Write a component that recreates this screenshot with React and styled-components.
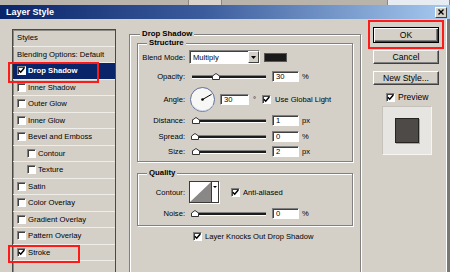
import styled, { createGlobalStyle } from "styled-components";

const GlobalStyle = createGlobalStyle`
  html, body {
    margin: 0;
    padding: 0;
    background: #d4d0c8;
  }
  body {
    font-family: "Liberation Sans", Arial, sans-serif;
    color: #000;
  }
`;

const Screen = styled.div`
  width: 450px;
  height: 272px;
  overflow: hidden;
  display: flex;
  flex-direction: column;
  background: #d4d0c8;
`;

const Backdrop = styled.div`
  height: 5px;
  flex: none;
  display: flex;
  background: #b8b4ac;
`;

const BackdropTab = styled.div`
  margin-left: ${(p) => p.$gap}px;
  width: ${(p) => p.$w}px;
  background: ${(p) => p.$bg};
  border-left: 1px solid #8c8880;
  border-right: 1px solid #8c8880;
`;

const TitleBar = styled.div`
  height: 14px;
  flex: none;
  display: flex;
  align-items: center;
  justify-content: space-between;
  padding: 0 3px 0 6px;
  background: linear-gradient(90deg, #0a246a 0%, #3b5c9c 45%, #a6caf0 100%);
  color: #fff;
  font-weight: bold;
  font-size: 9px;
`;

const CloseButton = styled.div`
  width: 12px;
  height: 11px;
  box-sizing: border-box;
  background: #d4d0c8;
  border: 1px solid;
  border-color: #fff #404040 #404040 #fff;
  display: flex;
  align-items: center;
  justify-content: center;
`;

const Body = styled.div`
  flex: 1;
  min-height: 0;
  display: flex;
  align-items: flex-start;
  padding-left: 12px;
  border-right: 3px solid #7a7872;
  box-shadow: inset -1px 0 0 #fff;
`;

/* ---------- left style list ---------- */

const StyleList = styled.div`
  width: 104px;
  flex: none;
  align-self: stretch;
  margin: 10px 0 -6px;
  box-sizing: border-box;
  border: 1px solid #4a4844;
  box-shadow: inset 1px 1px 0 #8d8a84;
  display: flex;
  flex-direction: column;
`;

const ListHeader = styled.div`
  height: 16.5px;
  flex: none;
  box-sizing: border-box;
  display: flex;
  align-items: center;
  padding-left: 4px;
  font-size: 7.7px;
  border-bottom: 1px solid #eeede8;
`;

const ListItem = styled.div`
  position: relative;
  height: 16.5px;
  flex: none;
  box-sizing: border-box;
  display: flex;
  align-items: center;
  padding-left: ${(p) => (p.$nested ? 14 : 4)}px;
  border-bottom: 1px solid #eeede8;
  background: ${(p) => (p.$selected ? "#0a246a" : "transparent")};
  color: ${(p) => (p.$selected ? "#fff" : "#000")};
  font-weight: ${(p) => (p.$selected ? "bold" : "normal")};
  font-size: 7.7px;
`;

const ItemText = styled.span`
  margin-left: ${(p) => (p.$plain ? 0 : 2)}px;
  white-space: nowrap;
`;

const Highlight = styled.div`
  position: absolute;
  left: -5px;
  top: ${(p) => p.$top}px;
  width: ${(p) => p.$w}px;
  height: ${(p) => p.$h}px;
  box-sizing: border-box;
  border: 2px solid #ff1a1a;
  pointer-events: none;
`;

/* ---------- group boxes ---------- */

const Group = styled.div`
  box-sizing: border-box;
  border: 1px solid #808080;
  box-shadow: inset 1px 1px 0 #fff, 1px 1px 0 #fff;
  display: flex;
  flex-direction: column;
`;

const OuterGroup = styled(Group)`
  width: 232px;
  flex: none;
  align-self: stretch;
  margin: 15px 0 -6px 13px;
  padding: 0 7px;
`;

const InnerGroup = styled(Group)`
  margin-top: ${(p) => p.$mt}px;
  padding-bottom: ${(p) => p.$pb}px;
`;

const Legend = styled.div`
  align-self: flex-start;
  margin: -6px 0 0 ${(p) => p.$indent}px;
  padding: 0 2px;
  height: 10px;
  line-height: 10px;
  background: #d4d0c8;
  font-weight: bold;
  font-size: 7.8px;
  white-space: nowrap;
`;

const Row = styled.div`
  height: ${(p) => p.$h}px;
  flex: none;
  display: flex;
  align-items: center;
  margin-top: ${(p) => p.$mt || 0}px;
  padding-left: ${(p) => p.$indent || 0}px;
  font-size: 7.6px;
  white-space: nowrap;
`;

const Label = styled.span`
  width: 47px;
  flex: none;
  margin-right: 4px;
  text-align: right;
`;

const Text = styled.span`
  margin-left: ${(p) => p.$ml || 0}px;
`;

const Field = styled.div`
  width: ${(p) => p.$w}px;
  height: 11px;
  margin-left: ${(p) => p.$ml}px;
  flex: none;
  box-sizing: border-box;
  background: #fff;
  border: 1px solid;
  border-color: #808080 #fff #fff #808080;
  box-shadow: inset 1px 1px 0 #404040;
  padding-left: 3px;
  line-height: 9px;
  font-size: 7.6px;
`;

const SelectBox = styled.div`
  width: 71px;
  height: 14px;
  flex: none;
  box-sizing: border-box;
  display: flex;
  background: #fff;
  border: 1px solid;
  border-color: #808080 #fff #fff #808080;
  box-shadow: inset 1px 1px 0 #404040;
`;

const SelectValue = styled.span`
  flex: 1;
  padding: 1px 0 0 3px;
  line-height: 11px;
`;

const SelectArrow = styled.span`
  width: 11px;
  box-sizing: border-box;
  background: #d4d0c8;
  border: 1px solid;
  border-color: #fff #404040 #404040 #fff;
  display: flex;
  align-items: center;
  justify-content: center;
`;

const Swatch = styled.div`
  width: 23px;
  height: 9px;
  margin-left: 4px;
  box-sizing: border-box;
  background: #1a1a1a;
  border: 1px solid #5a5854;
`;

const SliderWrap = styled.div`
  position: relative;
  width: 78px;
  height: 9px;
  flex: none;
`;

const Track = styled.div`
  position: absolute;
  left: 3px;
  right: 1px;
  top: 3px;
  height: 4px;
  box-sizing: border-box;
  border-top: 1px solid #808080;
  border-bottom: 1px solid #fff;
  background: #1c1c1c;
`;

const Thumb = styled.svg`
  position: absolute;
  top: 1px;
`;

const CheckBox = styled.span`
  width: 9px;
  height: 9px;
  flex: none;
  margin-left: ${(p) => p.$ml || 0}px;
  box-sizing: border-box;
  background: #fff;
  border: 1px solid;
  border-color: #808080 #fff #fff #808080;
  box-shadow: inset 1px 1px 0 #404040;
  display: flex;
  align-items: center;
  justify-content: center;
`;

const ContourPicker = styled.div`
  width: 30px;
  height: 22px;
  flex: none;
  box-sizing: border-box;
  display: flex;
  background: #fff;
  border: 1px solid #3a3a3a;
  box-shadow: 1px 1px 0 #fff;
`;

const ContourArrow = styled.div`
  flex: 1;
  border-left: 1px solid #3a3a3a;
  display: flex;
  justify-content: center;
  padding-top: 4px;
`;

/* ---------- right column ---------- */

const SideColumn = styled.div`
  width: 76px;
  flex: none;
  margin: 1px 0 0 7px;
  display: flex;
  flex-direction: column;
`;

const OkFrame = styled.div`
  box-sizing: border-box;
  border: 2px solid #ff1a1a;
  padding: 5px 3px 4px;
`;

const Button = styled.div`
  height: ${(p) => (p.$primary ? 16 : 14)}px;
  margin: ${(p) => (p.$primary ? "0" : `${p.$mt}px 5px 0`)};
  box-sizing: border-box;
  display: flex;
  align-items: center;
  justify-content: center;
  background: #d4d0c8;
  border: 1px solid;
  border-color: ${(p) =>
    p.$primary ? "#000" : "#fff #404040 #404040 #fff"};
  box-shadow: ${(p) =>
    p.$primary
      ? "inset 1px 1px 0 #fff, inset -1px -1px 0 #404040, inset -2px -2px 0 #808080"
      : "inset -1px -1px 0 #808080"};
  font-size: 8.6px;
`;

const PreviewToggle = styled.div`
  height: 14px;
  margin-top: 5px;
  padding-left: 18px;
  display: flex;
  align-items: center;
  font-size: 8.6px;
`;

const PreviewWell = styled.div`
  width: 50px;
  height: 49px;
  margin: 2px 0 0 14px;
  box-sizing: border-box;
  display: flex;
  align-items: center;
  justify-content: center;
  background: #e6e5e1;
  border: 1px solid;
  border-color: #c4c1ba #f6f5f2 #f6f5f2 #c4c1ba;
`;

const PreviewSwatch = styled.div`
  width: 24px;
  height: 25px;
  box-sizing: border-box;
  background: #4e4a47;
  border: 1px solid #262422;
  box-shadow: 1px 1px 0 #a9a7a2;
`;

/* ---------- small parts ---------- */

function Check({ checked, ml }) {
  return (
    <CheckBox $ml={ml}>
      {checked && (
        <svg width="7" height="7" viewBox="0 0 7 7">
          <path d="M0.8 3.2 L2.7 5.2 L6.3 1" fill="none" stroke="#000" strokeWidth="1.5" />
        </svg>
      )}
    </CheckBox>
  );
}

function Slider({ value }) {
  const x = 2 + value * 0.7;
  return (
    <SliderWrap>
      <Track />
      <Thumb width="8" height="7" viewBox="0 0 8 7" style={{ left: x }}>
        <path d="M0.5 3 L4 0.5 L7.5 3 L7.5 6.5 L0.5 6.5 Z" fill="#fff" stroke="#333" strokeWidth="1" />
      </Thumb>
    </SliderWrap>
  );
}

function SliderRow({ label, value, unit, h, mt }) {
  return (
    <Row $h={h} $mt={mt}>
      <Label>{label}</Label>
      <Slider value={value} />
      <Field $w={27} $ml={5}>{value}</Field>
      <Text $ml={3}>{unit}</Text>
    </Row>
  );
}

function Dial() {
  return (
    <svg width="27" height="27" viewBox="0 0 27 27">
      <circle cx="13.5" cy="13.5" r="12" fill="#f7f7f5" stroke="#5d6f9c" strokeWidth="1" />
      <path d="M3.5 19 A12 12 0 0 0 24 19" fill="none" stroke="#c9d0e0" strokeWidth="1" />
      <line x1="13.5" y1="13.5" x2="22.6" y2="8.3" stroke="#000" strokeWidth="1" />
      <circle cx="13.5" cy="13.5" r="1.3" fill="#000" />
    </svg>
  );
}

function DownArrow() {
  return (
    <svg width="5" height="3" viewBox="0 0 5 3">
      <path d="M0 0 H5 L2.5 3 Z" fill="#000" />
    </svg>
  );
}

const styleItems = [
  { name: "Blending Options: Default", plain: true },
  { name: "Drop Shadow", checked: true, selected: true, mark: { top: -1, w: 91, h: 21 } },
  { name: "Inner Shadow" },
  { name: "Outer Glow" },
  { name: "Inner Glow" },
  { name: "Bevel and Emboss" },
  { name: "Contour", nested: true },
  { name: "Texture", nested: true },
  { name: "Satin" },
  { name: "Color Overlay" },
  { name: "Gradient Overlay" },
  { name: "Pattern Overlay" },
  { name: "Stroke", checked: true, mark: { top: 0, w: 72, h: 18.5 } },
  { name: "" },
];

export default function App() {
  return (
    <Screen>
      <GlobalStyle />
      <Backdrop>
        <BackdropTab $gap={188} $w={33} $bg="#d8d4cc" />
        <BackdropTab $gap={165} $w={62} $bg="#e6ecf2" />
      </Backdrop>
      <TitleBar>
        <span>Layer Style</span>
        <CloseButton>
          <svg width="6" height="6" viewBox="0 0 6 6">
            <path d="M0.5 0.5 L5.5 5.5 M5.5 0.5 L0.5 5.5" stroke="#000" strokeWidth="1.4" />
          </svg>
        </CloseButton>
      </TitleBar>
      <Body>
        <StyleList>
          <ListHeader>Styles</ListHeader>
          {styleItems.map((item, i) => (
            <ListItem key={i} $nested={item.nested} $selected={item.selected}>
              {!item.plain && item.name && <Check checked={item.checked} />}
              <ItemText $plain={item.plain}>{item.name}</ItemText>
              {item.mark && (
                <Highlight $top={item.mark.top} $w={item.mark.w} $h={item.mark.h} />
              )}
            </ListItem>
          ))}
        </StyleList>

        <OuterGroup>
          <Legend $indent={3}>Drop Shadow</Legend>
          <InnerGroup $mt={4} $pb={3}>
            <Legend $indent={9}>Structure</Legend>
            <Row $h={18}>
              <Label>Blend Mode:</Label>
              <SelectBox>
                <SelectValue>Multiply</SelectValue>
                <SelectArrow>
                  <DownArrow />
                </SelectArrow>
              </SelectBox>
              <Swatch />
            </Row>
            <SliderRow label="Opacity:" value={30} unit="%" h={20} />
            <Row $h={26}>
              <Label>Angle:</Label>
              <Dial />
              <Field $w={29} $ml={4}>30</Field>
              <Text $ml={4}>°</Text>
              <Check checked ml={6} />
              <Text $ml={4}>Use Global Light</Text>
            </Row>
            <SliderRow label="Distance:" value={1} unit="px" h={16} />
            <SliderRow label="Spread:" value={0} unit="%" h={16} />
            <SliderRow label="Size:" value={2} unit="px" h={14} />
          </InnerGroup>

          <InnerGroup $mt={11} $pb={5}>
            <Legend $indent={9}>Quality</Legend>
            <Row $h={28}>
              <Label>Contour:</Label>
              <ContourPicker>
                <svg width="21" height="20" viewBox="0 0 21 20">
                  <path d="M0 20 L21 0 L21 20 Z" fill="#8a8886" />
                </svg>
                <ContourArrow>
                  <svg width="4" height="2" viewBox="0 0 4 2">
                    <path d="M0 0 H4 L2 2 Z" fill="#000" />
                  </svg>
                </ContourArrow>
              </ContourPicker>
              <Check checked ml={12} />
              <Text $ml={3}>Anti-aliased</Text>
            </Row>
            <SliderRow label="Noise:" value={0} unit="%" h={14} />
          </InnerGroup>

          <Row $h={12} $mt={4} $indent={56}>
            <Check checked />
            <Text $ml={3}>Layer Knocks Out Drop Shadow</Text>
          </Row>
        </OuterGroup>

        <SideColumn>
          <OkFrame>
            <Button $primary>OK</Button>
          </OkFrame>
          <Button $mt={1}>Cancel</Button>
          <Button $mt={7}>New Style...</Button>
          <PreviewToggle>
            <Check checked />
            <Text $ml={3}>Preview</Text>
          </PreviewToggle>
          <PreviewWell>
            <PreviewSwatch />
          </PreviewWell>
        </SideColumn>
      </Body>
    </Screen>
  );
}
